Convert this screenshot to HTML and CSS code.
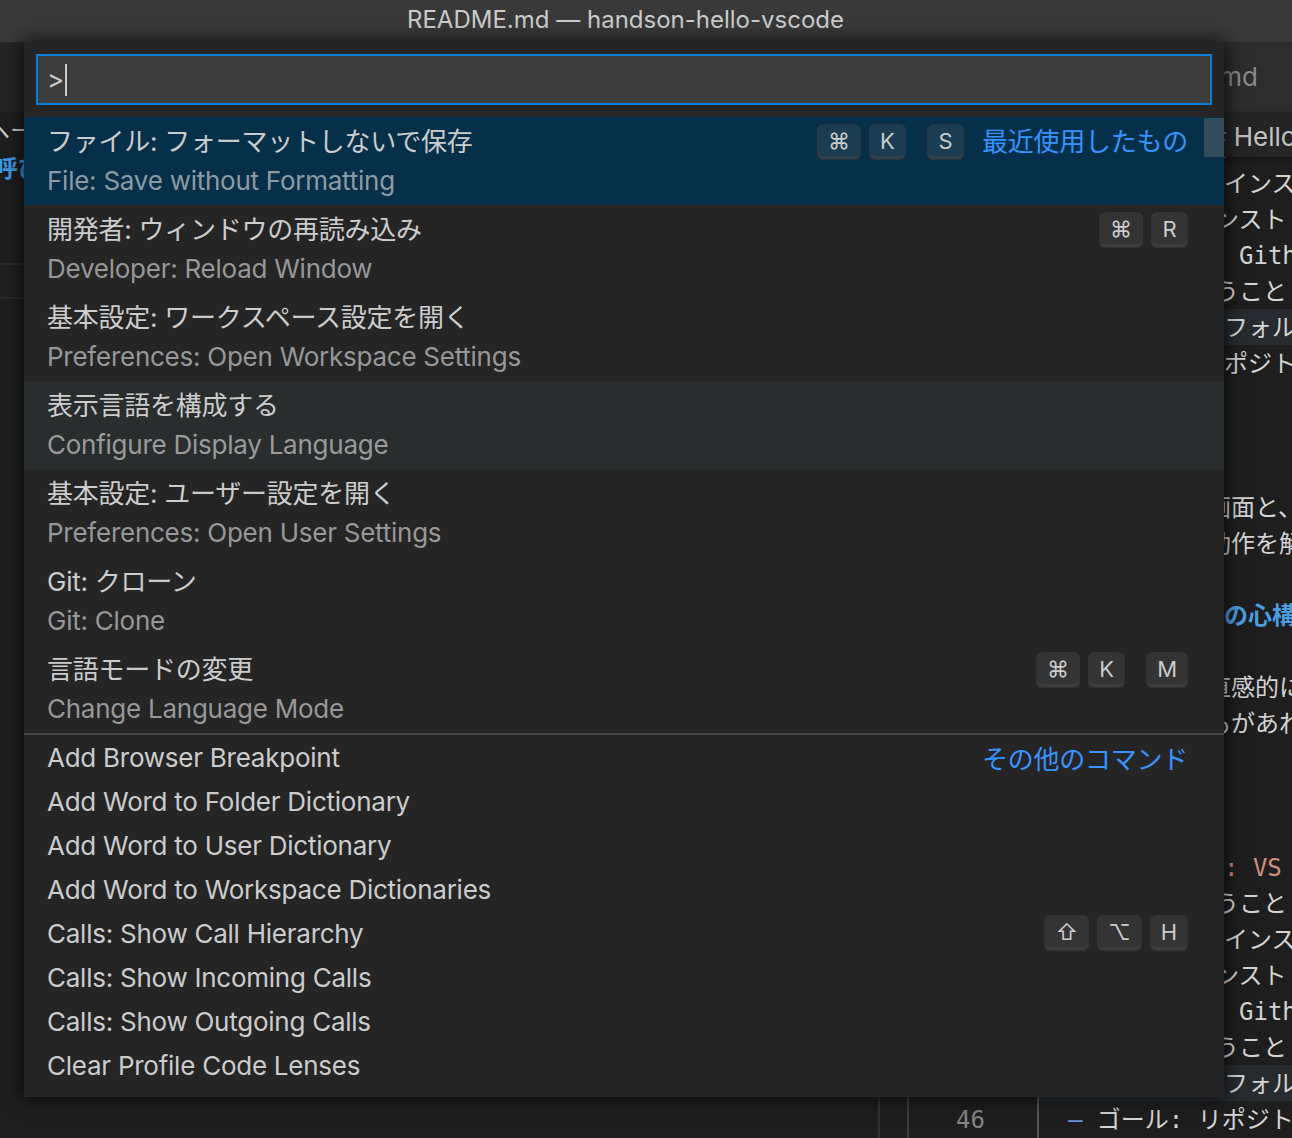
FILE: index.html
```html
<!DOCTYPE html>
<html lang="ja">
<head>
<meta charset="utf-8">
<title>README.md — handson-hello-vscode</title>
<link rel="stylesheet" href="styles.css">
</head>
<body>
<div class="window">
  <header class="titlebar">README.md — handson-hello-vscode</header>
  <div class="tabbar">
    <div class="tab-fill"></div>
    <div class="tab">README.md</div>
  </div>
  <div class="workspace">
    <aside class="side">
      <div class="side-line first">ヘーム</div>
      <div class="side-line link">呼び出</div>
      <div class="side-band"></div>
    </aside>
    <section class="editor">
      <div class="breadcrumbs"><span class="crumb-hash">#</span> Hello VS Code</div>
      <div class="code">
        <div class="code-inner">
          <div class="line"><span class="c1"></span><span class="gut"></span><span class="txt frag-cut">うこと</span></div>
          <div class="line"><span class="c1"></span><span class="gut"></span><span class="txt frag">インスト</span></div>
          <div class="line"><span class="c1"></span><span class="gut"></span><span class="txt frag-cut">ンスト</span></div>
          <div class="line"><span class="c1"></span><span class="gut"></span><span class="txt frag-g">Github</span></div>
          <div class="line"><span class="c1"></span><span class="gut"></span><span class="txt frag-cut">うこと</span></div>
          <div class="line hl"><span class="c1"></span><span class="gut"></span><span class="txt frag">フォルダ</span></div>
          <div class="line"><span class="c1"></span><span class="gut"></span><span class="txt frag">ポジトリ</span></div>
          <div class="line"><span class="c1"></span><span class="gut"></span><span class="txt"></span></div>
          <div class="line"><span class="c1"></span><span class="gut"></span><span class="txt"></span></div>
          <div class="line"><span class="c1"></span><span class="gut"></span><span class="txt"></span></div>
          <div class="line"><span class="c1"></span><span class="gut"></span><span class="txt frag-deep">画面と、</span></div>
          <div class="line"><span class="c1"></span><span class="gut"></span><span class="txt frag-deep">動作を解説</span></div>
          <div class="line"><span class="c1"></span><span class="gut"></span><span class="txt"></span></div>
          <div class="line"><span class="c1"></span><span class="gut"></span><span class="txt frag heading">の心構え</span></div>
          <div class="line"><span class="c1"></span><span class="gut"></span><span class="txt"></span></div>
          <div class="line"><span class="c1"></span><span class="gut"></span><span class="txt frag-deep">直感的に</span></div>
          <div class="line"><span class="c1"></span><span class="gut"></span><span class="txt frag-deep">もがあれ</span></div>
          <div class="line"><span class="c1"></span><span class="gut"></span><span class="txt"></span></div>
          <div class="line"><span class="c1"></span><span class="gut"></span><span class="txt"></span></div>
          <div class="line"><span class="c1"></span><span class="gut"></span><span class="txt"></span></div>
          <div class="line"><span class="c1"></span><span class="gut"></span><span class="txt frag str">: VS Code</span></div>
          <div class="line"><span class="c1"></span><span class="gut"></span><span class="txt frag-cut">うこと</span></div>
          <div class="line"><span class="c1"></span><span class="gut"></span><span class="txt frag">インスト</span></div>
          <div class="line"><span class="c1"></span><span class="gut"></span><span class="txt frag-cut">ンスト</span></div>
          <div class="line"><span class="c1"></span><span class="gut"></span><span class="txt frag-g">Github</span></div>
          <div class="line"><span class="c1"></span><span class="gut"></span><span class="txt frag-cut">うこと</span></div>
          <div class="line hl"><span class="c1"></span><span class="gut"></span><span class="txt frag">フォルダ</span></div>
          <div class="line"><span class="c1"></span><span class="gut">46</span><span class="txt">  <span class="bullet">–</span> ゴール: リポジトリ</span></div>
        </div>
      </div>
    </section>
  </div>

  <div class="quick-input">
    <div class="qi-header">
      <div class="qi-box"><span class="qi-value">&gt;</span><span class="caret"></span></div>
    </div>
    <div class="qi-list">
      <div class="item two selected">
        <div class="row-main">
          <span class="label">ファイル: フォーマットしないで保存</span>
          <span class="keys"><span class="chord"><span class="kb">⌘</span><span class="kb">K</span></span><span class="chord"><span class="kb">S</span></span></span>
          <span class="tag">最近使用したもの</span>
        </div>
        <div class="desc">File: Save without Formatting</div>
      </div>
      <div class="item two">
        <div class="row-main">
          <span class="label">開発者: ウィンドウの再読み込み</span>
          <span class="keys"><span class="chord"><span class="kb">⌘</span><span class="kb">R</span></span></span>
        </div>
        <div class="desc">Developer: Reload Window</div>
      </div>
      <div class="item two">
        <div class="row-main"><span class="label">基本設定: ワークスペース設定を開く</span></div>
        <div class="desc">Preferences: Open Workspace Settings</div>
      </div>
      <div class="item two hover">
        <div class="row-main"><span class="label">表示言語を構成する</span></div>
        <div class="desc">Configure Display Language</div>
      </div>
      <div class="item two">
        <div class="row-main"><span class="label">基本設定: ユーザー設定を開く</span></div>
        <div class="desc">Preferences: Open User Settings</div>
      </div>
      <div class="item two">
        <div class="row-main"><span class="label">Git: クローン</span></div>
        <div class="desc">Git: Clone</div>
      </div>
      <div class="item two">
        <div class="row-main">
          <span class="label">言語モードの変更</span>
          <span class="keys"><span class="chord"><span class="kb">⌘</span><span class="kb">K</span></span><span class="chord"><span class="kb">M</span></span></span>
        </div>
        <div class="desc">Change Language Mode</div>
      </div>
      <div class="item one group-start">
        <span class="label">Add Browser Breakpoint</span>
        <span class="tag">その他のコマンド</span>
      </div>
      <div class="item one"><span class="label">Add Word to Folder Dictionary</span></div>
      <div class="item one"><span class="label">Add Word to User Dictionary</span></div>
      <div class="item one"><span class="label">Add Word to Workspace Dictionaries</span></div>
      <div class="item one">
        <span class="label">Calls: Show Call Hierarchy</span>
        <span class="keys"><span class="chord"><span class="kb">⇧</span><span class="kb">⌥</span><span class="kb">H</span></span></span>
      </div>
      <div class="item one"><span class="label">Calls: Show Incoming Calls</span></div>
      <div class="item one"><span class="label">Calls: Show Outgoing Calls</span></div>
      <div class="item one"><span class="label">Clear Profile Code Lenses</span></div>
      <div class="scroll-slider"></div>
    </div>
  </div>
</div>
</body>
</html>
```

FILE: styles.css
```css
* {
  box-sizing: border-box;
  margin: 0;
  padding: 0;
}

html,
body {
  width: 1292px;
  height: 1138px;
  overflow: hidden;
  background: #1e1e1e;
}

body {
  font-family: "Inter", "Noto Sans CJK JP", sans-serif;
  color: #cccccc;
}

.window {
  position: relative;
  width: 1292px;
  height: 1138px;
  overflow: hidden;
}

/* title bar */
.titlebar {
  height: 42px;
  background: #393939;
  color: #cccccc;
  font-size: 24px;
  line-height: 40px;
  padding-left: 407px;
  white-space: nowrap;
}

/* tab bar */
.tabbar {
  height: 70px;
  display: flex;
  background: #252526;
}

.tab-fill {
  flex: 1;
}

.tab {
  background: #2d2d2d;
  color: #8a8a8a;
  font-size: 26px;
  line-height: 70px;
  padding: 0 34px 0 40px;
  white-space: nowrap;
}

/* workspace */
.workspace {
  display: flex;
  height: 1026px;
}

.side {
  width: 878px;
  flex-shrink: 0;
  background: #1e1e1e;
  overflow: hidden;
}

.side-line {
  height: 38px;
  line-height: 38px;
  font-size: 24px;
  color: #cccccc;
  white-space: nowrap;
}

.side-line.first {
  text-indent: -14px;
}

.side-line.link {
  color: #3f9be8;
  font-weight: 700;
  text-indent: -6px;
}

.side-band {
  margin-top: 75px;
  height: 36px;
  background: #202020;
  border-top: 2px solid #2b2b2b;
  border-bottom: 2px solid #2b2b2b;
}

.editor {
  flex: 1;
  display: flex;
  flex-direction: column;
  position: relative;
  min-width: 0;
}

.breadcrumbs {
  height: 45px;
  background: #252526;
  font-size: 26px;
  line-height: 49px;
  color: #c2c2c2;
  padding-left: 332px;
  white-space: nowrap;
  overflow: hidden;
  box-shadow: 0 3px 6px rgba(0, 0, 0, 0.35);
  position: relative;
  z-index: 1;
}

.crumb-hash {
  color: #8a8a8a;
}

.code {
  flex: 1;
  overflow: hidden;
}

.code-inner {
  margin-top: -28px;
}

.line {
  display: grid;
  grid-template-columns: 29px 132px 1fr;
  height: 36px;
  font-family: "DejaVu Sans Mono", "Noto Sans CJK JP", monospace;
  font-size: 24px;
  line-height: 38px;
  color: #d4d4d4;
}

.line .c1 {
  border-left: 2px solid #333333;
}

.line .gut {
  border-left: 2px solid #3c3c3c;
  color: #858585;
  text-align: right;
  padding-right: 54px;
}

.line .txt {
  border-left: 2px solid #555555;
  white-space: pre;
  overflow: hidden;
  margin-left: -2px;
}

.line.hl .txt {
  background: #272b2f;
}

.frag {
  padding-left: 185px;
}

.frag-cut {
  padding-left: 176px;
}

.frag-deep {
  padding-left: 168px;
}

.frag-g {
  padding-left: 200px;
}

.heading {
  color: #4b9de0;
  font-weight: 700;
}

.str {
  color: #ce9178;
}

.bullet {
  color: #6796e6;
}

/* quick input */
.quick-input {
  position: absolute;
  left: 24px;
  top: 42px;
  width: 1200px;
  height: 1055px;
  background: #252526;
  box-shadow: 0 0 18px 2px rgba(0, 0, 0, 0.7);
  z-index: 10;
  overflow: hidden;
}

.qi-header {
  padding: 12px;
}

.qi-box {
  height: 51px;
  border: 2px solid #0a7fd6;
  background: #3c3c3c;
  padding-left: 9px;
  display: flex;
  align-items: center;
  font-size: 26px;
  color: #cccccc;
}

.caret {
  width: 2px;
  height: 32px;
  background: #cccccc;
  margin-left: 1px;
}

.qi-list {
  position: relative;
}

.item {
  padding: 0 36px 0 23px;
  font-size: 26px;
  letter-spacing: -0.25px;
  color: #cccccc;
  white-space: nowrap;
}

.item.two {
  height: 88px;
  padding-top: 1px;
  display: flex;
  flex-direction: column;
}

.item.one {
  height: 44px;
  display: flex;
  align-items: center;
}

.item.group-start {
  height: 46px;
  border-top: 2px solid #46464b;
  padding-top: 1px;
}

.item.selected {
  background: #062f4a;
}

.item.hover {
  background: #2a2d2e;
}

.row-main {
  height: 42px;
  display: flex;
  align-items: center;
}

.row-main .keys {
  margin-top: 5px;
}

.label {
  flex: 1;
}

.desc {
  height: 41px;
  line-height: 41px;
  color: rgba(204, 204, 204, 0.7);
}

.keys {
  display: flex;
  align-items: center;
  gap: 21px;
  letter-spacing: 0;
}

.chord {
  display: flex;
  gap: 8px;
}

.kb {
  display: inline-block;
  height: 36px;
  min-width: 37px;
  padding: 0 10px;
  border-radius: 6px;
  background: rgba(128, 128, 128, 0.17);
  border: 1px solid rgba(51, 51, 51, 0.6);
  box-shadow: inset 0 -3px 0 rgba(68, 68, 68, 0.5);
  font-size: 22px;
  line-height: 33px;
  text-align: center;
  color: #cccccc;
}

.tag {
  color: #3794ff;
  margin-left: 18px;
}

.scroll-slider {
  position: absolute;
  right: 0;
  top: 1px;
  width: 20px;
  height: 39px;
  background: rgba(121, 121, 121, 0.4);
}
```
